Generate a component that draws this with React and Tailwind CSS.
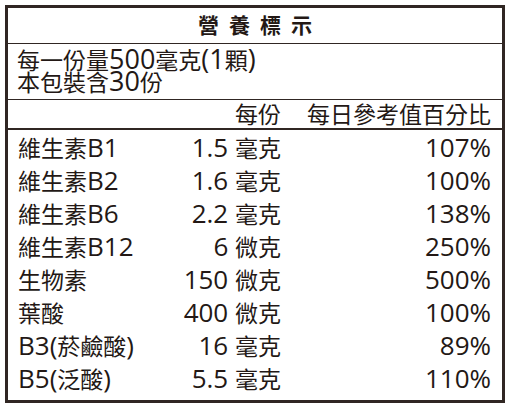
import React from "react";

const rows = [
  ["維生素B1", "1.5 毫克", "107%"],
  ["維生素B2", "1.6 毫克", "100%"],
  ["維生素B6", "2.2 毫克", "138%"],
  ["維生素B12", "6 微克", "250%"],
  ["生物素", "150 微克", "500%"],
  ["葉酸", "400 微克", "100%"],
  ["B3(菸鹼酸)", "16 毫克", "89%"],
  ["B5(泛酸)", "5.5 毫克", "110%"],
];

function Mixed({ text, cjk }) {
  const parts = text.split(/([\u3000-\u9fff\uff00-\uffef]+)/).filter((p) => p !== "");
  return (
    <>
      {parts.map((p, i) =>
        /[\u3000-\u9fff\uff00-\uffef]/.test(p) ? (
          <span key={i} className={cjk}>
            {p}
          </span>
        ) : (
          <span key={i}>{p}</span>
        )
      )}
    </>
  );
}

export default function App() {
  return (
    <div
      className="w-[513px] h-[409px] bg-white pt-[5px] pl-[5px] text-[#231815]"
      style={{ fontFamily: '"Open Sans", "Noto Sans CJK TC", sans-serif' }}
    >
      <div className="w-[500px] h-[398px] border-[3px] border-[#302623] flex flex-col">
        <div className="h-[36px] shrink-0 flex items-center justify-center border-b border-[#302623]">
          <span className="font-bold text-[21px] leading-none tracking-[10px] mr-[-10px]">營養標示</span>
        </div>
        <div className="h-[56px] shrink-0 border-b border-[#302623] pl-[9px] pt-[4px] text-[27px] leading-[22px] whitespace-nowrap">
          <div className="h-[22px]">
            <Mixed text="每一份量500毫克(1顆)" cjk="text-[23px]" />
          </div>
          <div className="h-[22px]">
            <Mixed text="本包裝含30份" cjk="text-[23px]" />
          </div>
        </div>
        <div className="h-[30px] shrink-0 border-b-2 border-[#302623] flex items-center pl-[10px] pr-[11px] text-[23px] leading-none">
          <div className="w-[140px]"></div>
          <div className="w-[123px] text-right">每份</div>
          <div className="flex-1 text-right">每日參考值百分比</div>
        </div>
        <div className="flex flex-col">
          {rows.map((r) => (
            <div key={r[0]} className="h-[33px] flex items-center pl-[10px] pr-[11px] text-[26px] leading-none">
              <div className="w-[140px] whitespace-nowrap">
                <Mixed text={r[0]} cjk="text-[23px]" />
              </div>
              <div className="w-[123px] text-right whitespace-nowrap">
                <Mixed text={r[1]} cjk="text-[23px]" />
              </div>
              <div className="flex-1 text-right">{r[2]}</div>
            </div>
          ))}
        </div>
      </div>
    </div>
  );
}
